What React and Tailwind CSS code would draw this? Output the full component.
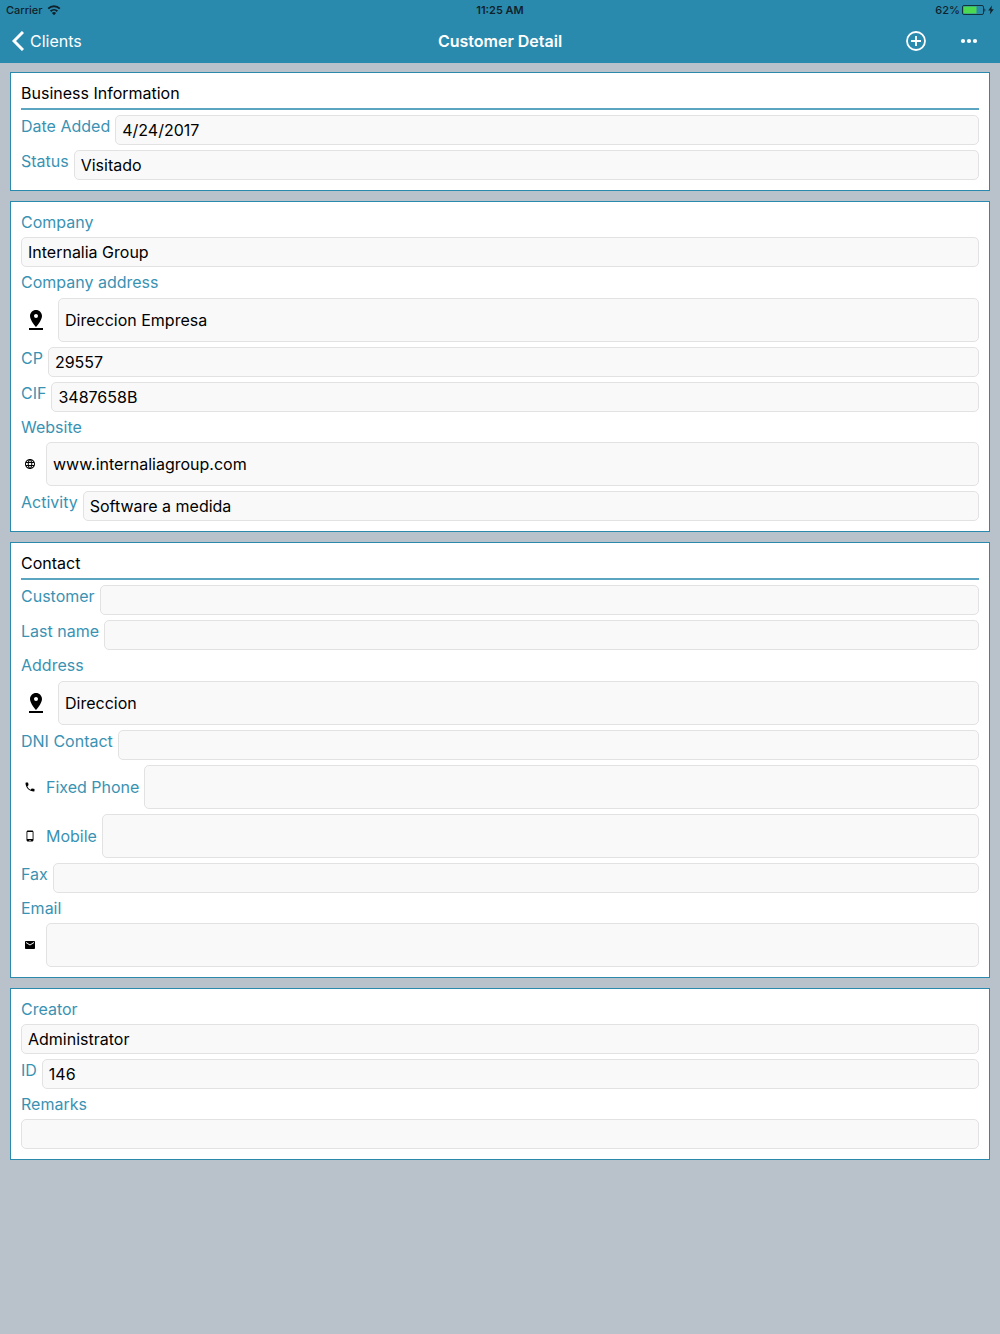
import React, { useId } from 'react';
import clsx from 'clsx';
import { MdPinDrop, MdLanguage, MdPhone, MdPhoneAndroid, MdEmail } from 'react-icons/md';

const StatusBar = () => (
    <div className="grid h-5 grid-cols-3 items-center px-1.5 text-[11px] leading-5 text-[#10222b]">
        <div className="flex items-center gap-1 font-medium">
            <span>Carrier</span>
            <svg className="h-3 w-3.5" viewBox="0 0 14 12" fill="none" stroke="currentColor" strokeWidth="1.9">
                <path d="M1.2 4.6a8.3 8.3 0 0 1 11.6 0" />
                <path d="M3.6 7.2a4.9 4.9 0 0 1 6.8 0" />
                <path d="M7 11.2 4.9 9.1a3 3 0 0 1 4.2 0z" fill="currentColor" stroke="none" />
            </svg>
        </div>
        <span className="text-center font-semibold">11:25 AM</span>
        <div className="flex items-center justify-end gap-0.5 font-medium">
            <span>62%</span>
            <svg className="h-2.5 w-6" viewBox="0 0 24 10">
                <rect x="0.5" y="0.5" width="21" height="9" rx="1.5" fill="none" stroke="#12303d" />
                <rect x="1.5" y="1.5" width="13" height="7" fill="#4cd94f" />
                <path d="M22.4 3.2c1.3.3 1.3 3.3 0 3.6z" fill="#12303d" />
            </svg>
            <svg className="h-2.5 w-1.5" viewBox="0 0 6 10">
                <path d="M4 0.5 0.2 5.6h2.3L1.8 9.5 5.8 4.3H3.4z" fill="currentColor" />
            </svg>
        </div>
    </div>
);

const NavBar = () => (
    <nav className="grid h-[43px] grid-cols-3 items-center px-3 pb-0.5 text-base text-white">
        <a href="#clients" className="flex items-center gap-1.5 justify-self-start">
            <svg className="h-5 w-3" viewBox="0 0 12 20" fill="none" stroke="currentColor" strokeWidth="3">
                <path d="M11 1 2 10l9 9" />
            </svg>
            Clients
        </a>
        <h1 className="text-center font-semibold">Customer Detail</h1>
        <div className="flex items-center gap-[34px] justify-self-end pr-2.5">
            <button type="button" aria-label="Add">
                <svg className="size-5" viewBox="0 0 20 20" fill="none" stroke="currentColor" strokeWidth="1.8">
                    <circle cx="10" cy="10" r="9" />
                    <path d="M10 5v10M5 10h10" />
                </svg>
            </button>
            <button type="button" aria-label="More">
                <svg className="h-5 w-4.5" viewBox="0 0 18 20" fill="currentColor">
                    <circle cx="3" cy="10" r="2.1" />
                    <circle cx="9" cy="10" r="2.1" />
                    <circle cx="15" cy="10" r="2.1" />
                </svg>
            </button>
        </div>
    </nav>
);

const Card = ({ title, children }) => (
    <section className="flex flex-col gap-[5px] border border-[#2a8aae] bg-white p-2.5">
        {title && (
            <h2 className="border-b-2 border-[#5ba5c0] pb-[5px] leading-5 text-black">{title}</h2>
        )}
        {children}
    </section>
);

const Field = ({ label, value = '', icon: Icon, largeIcon, stacked, type = 'text' }) => {
    const id = useId();

    const labelEl = (
        <label
            htmlFor={id}
            className={clsx('shrink-0 text-[#3a92b3]', stacked ? 'leading-5' : 'leading-[22px]', Icon && !stacked && 'self-center')}
        >
            {label}
        </label>
    );

    return (
        <div className={clsx('flex flex-col', largeIcon ? 'gap-1.5' : 'gap-[5px]')}>
            {stacked && labelEl}
            <div className="flex items-start gap-[5px]">
                {Icon && (
                    <button
                        type="button"
                        aria-label={`Open ${label}`}
                        className={clsx('mr-0.5 flex shrink-0 justify-center self-center text-black', largeIcon ? 'w-[30px]' : 'w-[18px]')}
                    >
                        <Icon className={largeIcon ? 'size-6' : 'size-3'} />
                    </button>
                )}
                {!stacked && labelEl}
                <input
                    id={id}
                    type={type}
                    defaultValue={value}
                    className={clsx(
                        'min-w-0 flex-1 rounded-[5px] border border-[#e2e2e2] bg-[#f9f9f9] px-1.5 text-black outline-none',
                        Icon ? 'h-11' : 'h-[30px]'
                    )}
                />
            </div>
        </div>
    );
};

export default function App() {
    return (
        <div className="min-h-screen bg-[#b9c1ca] font-['Inter',sans-serif] text-base">
            <header className="bg-[#2a8aae]">
                <StatusBar />
                <NavBar />
            </header>

            <main className="flex flex-col gap-2.5 px-2.5 pb-2.5 pt-[9px]">
                <Card title="Business Information">
                    <Field label="Date Added" value="4/24/2017" />
                    <Field label="Status" value="Visitado" />
                </Card>

                <Card>
                    <Field label="Company" value="Internalia Group" stacked />
                    <Field label="Company address" value="Direccion Empresa" icon={MdPinDrop} largeIcon stacked />
                    <Field label="CP" value="29557" />
                    <Field label="CIF" value="3487658B" />
                    <Field label="Website" value="www.internaliagroup.com" icon={MdLanguage} stacked />
                    <Field label="Activity" value="Software a medida" />
                </Card>

                <Card title="Contact">
                    <Field label="Customer" />
                    <Field label="Last name" />
                    <Field label="Address" value="Direccion" icon={MdPinDrop} largeIcon stacked />
                    <Field label="DNI Contact" />
                    <Field label="Fixed Phone" icon={MdPhone} type="tel" />
                    <Field label="Mobile" icon={MdPhoneAndroid} type="tel" />
                    <Field label="Fax" type="tel" />
                    <Field label="Email" icon={MdEmail} type="email" stacked />
                </Card>

                <Card>
                    <Field label="Creator" value="Administrator" stacked />
                    <Field label="ID" value="146" />
                    <Field label="Remarks" stacked />
                </Card>
            </main>
        </div>
    );
}
